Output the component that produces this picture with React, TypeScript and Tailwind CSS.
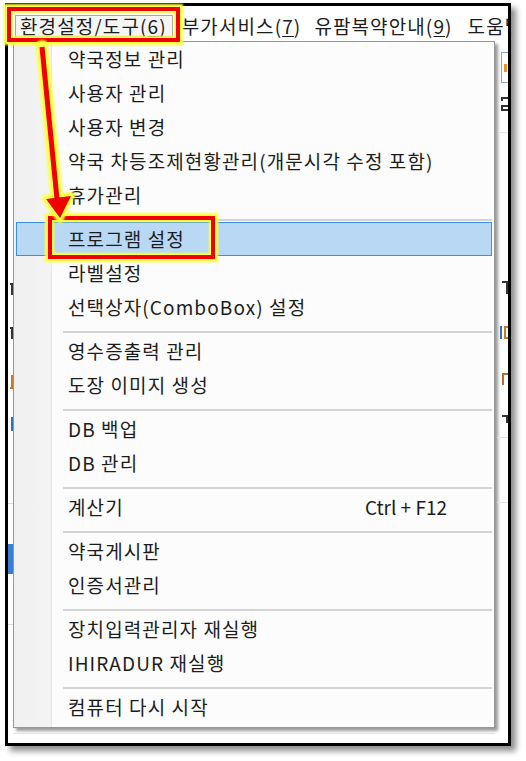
import { Fragment } from 'react';

type Item = { label: string; shortcut?: string };

const groups: Item[][] = [
  [
    { label: '약국정보 관리' },
    { label: '사용자 관리' },
    { label: '사용자 변경' },
    { label: '약국 차등조제현황관리(개문시각 수정 포함)' },
    { label: '휴가관리' },
  ],
  [{ label: '프로그램 설정' }, { label: '라벨설정' }, { label: '선택상자(ComboBox) 설정' }],
  [{ label: '영수증출력 관리' }, { label: '도장 이미지 생성' }],
  [{ label: 'DB 백업' }, { label: 'DB 관리' }],
  [{ label: '계산기', shortcut: 'Ctrl + F12' }],
  [{ label: '약국게시판' }, { label: '인증서관리' }],
  [{ label: '장치입력관리자 재실행' }, { label: 'IHIRADUR 재실행' }],
  [{ label: '컴퓨터 다시 시작' }],
];

function MenuBar() {
  return (
    <div className="h-[35px] flex items-end pb-[4px] pl-[7px] text-[19px] leading-[20px] tracking-[1.1px] whitespace-nowrap overflow-hidden">
      <span className="h-[22px] pl-[4px] pr-[5px] border border-[#a9a9a9] bg-[#f5f5f5]">
        환경설정/도구(<u className="underline-offset-2">6</u>)
      </span>
      <span className="ml-[9px] mb-[1px]">
        부가서비스(<u className="underline-offset-2">7</u>)
      </span>
      <span className="ml-[13px] mb-[1px]">
        유팜복약안내(<u className="underline-offset-2">9</u>)
      </span>
      <span className="ml-[15px] mb-[1px]">도움말</span>
    </div>
  );
}

function Row({ item, selected }: { item: Item; selected: boolean }) {
  if (selected) {
    return (
      <div className="relative mx-[2px] h-[34px] flex items-center pl-[51px] bg-[#b9d8f3] border border-[#3c8fe4]">
        <span className="tracking-[1.1px]">{item.label}</span>
        <div className="absolute left-[31px] -top-[7px] -bottom-[4px] w-[167px] border-[4px] border-[#f00000] shadow-[0_0_2px_3px_#ffff3c,inset_0_0_2px_2px_#ffff3c]" />
      </div>
    );
  }
  return (
    <div className="h-[34px] flex items-center pl-[54px] pr-[47px]">
      <span className="tracking-[1.1px]">{item.label}</span>
      {item.shortcut && <span className="ml-auto">{item.shortcut}</span>}
    </div>
  );
}

function Dropdown() {
  return (
    <div className="border border-[#979797] pb-[3px] bg-[linear-gradient(to_right,#f0f0f0_0,#f3f3f3_37px,#e6e6e6_37px,#e6e6e6_38px,#fcfcfc_38px)] shadow-[3px_3px_3px_rgba(0,0,0,0.4)] text-[19px] leading-[22px] whitespace-nowrap">
      {groups.map((group, gi) => (
        <Fragment key={gi}>
          {gi > 0 && (
            <div className="h-[10px] pt-[7px] pl-[49px] pr-[2px]">
              <div className="h-[2px] bg-[#d3d3d3]" />
            </div>
          )}
          {group.map((item) => (
            <Row key={item.label} item={item} selected={item.label === '프로그램 설정'} />
          ))}
        </Fragment>
      ))}
    </div>
  );
}

// bits of the window behind the menu, only slivers show at the edges
function LeftStrip() {
  return (
    <div className="w-[5px] flex flex-col items-end overflow-hidden">
      <div className="mt-[242px] w-[3px] h-[12px] border-t-2 border-r-2 border-[#333]" />
      <div className="mt-[32px] w-[3px] h-[12px] border-t-2 border-r-2 border-[#333]" />
      <div className="mt-[36px] w-[3px] h-[14px] border-r-2 border-b-2 border-[#c77a2e]" />
      <div className="mt-[28px] w-[2px] h-[14px] bg-[#2f6fc4]" />
      <div className="mt-[72px] w-full h-px bg-[#dcdcdc]" />
      <div className="mt-[40px] w-full h-[30px] bg-[#3b7fd4]" />
      <div className="mt-[50px] w-full h-px bg-[#dcdcdc]" />
    </div>
  );
}

function RightStrip() {
  return (
    <div className="w-[13px] flex flex-col overflow-hidden">
      <div className="mt-[11px] ml-[6px] h-[31px] border border-r-0 border-[#8aa4c8] bg-white flex items-center pl-[2px]">
        <div className="w-[3px] h-[8px] bg-[#e8962e]" />
      </div>
      <div className="mt-[14px] ml-[6px] w-[7px] h-[4px] border-t-2 border-l-2 border-[#333]" />
      <div className="mt-[4px] ml-[6px] w-[7px] h-[6px] border-2 border-r-0 border-[#333]" />
      <div className="mt-[21px] ml-[5px] h-px bg-[#e2e2e2]" />
      <div className="mt-[148px] ml-[7px] w-[6px] h-[13px] border-t-2 border-r-2 border-[#333]" />
      <div className="mt-[32px] ml-[5px] flex gap-[2px]">
        <div className="w-[2px] h-[13px] bg-[#2f6fc4]" />
        <div className="w-[5px] h-[13px] border-2 border-r-0 border-[#c77a2e]" />
      </div>
      <div className="mt-[34px] ml-[7px] w-[6px] h-[12px] border-t-2 border-l-2 border-[#b0702c]" />
      <div className="mt-[30px] ml-[7px] w-[6px] h-[8px] border-t-2 border-r-2 border-[#333]" />
      <div className="mt-[14px] ml-[2px] h-px bg-[#e2e2e2]" />
      <div className="mt-[64px] ml-[2px] h-px bg-[#e2e2e2]" />
    </div>
  );
}

function Arrow() {
  return (
    <svg className="absolute left-0 top-0" width="120" height="240" viewBox="0 0 120 240">
      <defs>
        <filter id="glow" x="-50%" y="-50%" width="200%" height="200%">
          <feGaussianBlur stdDeviation="1.2" />
        </filter>
      </defs>
      <g filter="url(#glow)" stroke="#ffff3c" fill="#ffff3c" strokeLinejoin="round" strokeLinecap="round">
        <line x1="42" y1="46" x2="57" y2="199" strokeWidth="12" />
        <polygon points="45,198 72,195 60,220" strokeWidth="6" />
      </g>
      <line x1="42" y1="47" x2="57" y2="199" stroke="#f00000" strokeWidth="5" />
      <polygon points="46,199 71,196 60,218" fill="#f00000" />
    </svg>
  );
}

export default function App() {
  return (
    <div className="relative w-[526px] h-[761px] bg-white overflow-hidden font-['Noto_Sans_CJK_KR','Noto_Sans',sans-serif] text-[#1c1c1c]">
      <div className="ml-[5px] mt-[3px] w-[506px] h-[743px] border-[3px] border-black bg-white shadow-[5px_5px_6px_rgba(0,0,0,0.45)] flex flex-col">
        <MenuBar />
        <div className="flex flex-1 min-h-0">
          <LeftStrip />
          <div className="w-[482px] flex flex-col">
            <Dropdown />
            <div className="mt-[5px] border-t border-[#e3e3e3]" />
          </div>
          <RightStrip />
        </div>
      </div>
      <div className="absolute left-[7px] top-[7px] w-[173px] h-[35px] border-[4px] border-[#f00000] shadow-[0_0_2px_3px_#ffff3c,inset_0_0_2px_2px_#ffff3c]" />
      <Arrow />
    </div>
  );
}
